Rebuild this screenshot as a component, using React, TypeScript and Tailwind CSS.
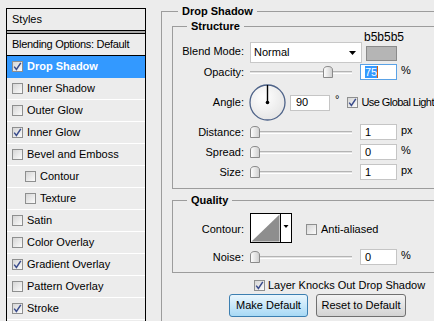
import React from "react";

function Check({ checked, className = "" }: { checked?: boolean; className?: string }) {
  return (
    <span
      className={
        "inline-flex w-[11px] h-[11px] border border-[#8e8f8f] bg-linear-to-br from-[#d6d6d6] to-[#fbfbfb] items-center justify-center shrink-0 " +
        className
      }
    >
      {checked && (
        <svg width="9" height="9" viewBox="0 0 9 9">
          <path d="M1.2 4.6 L3.4 7.4 L7.8 0.8" fill="none" stroke="#3a4c8c" strokeWidth="1.5" />
        </svg>
      )}
    </span>
  );
}

function Thumb() {
  return (
    <svg width="10" height="12" viewBox="0 0 10 12" className="shrink-0">
      <defs>
        <linearGradient id="tg" x1="0" y1="0" x2="1" y2="0">
          <stop offset="0" stopColor="#ffffff" />
          <stop offset="1" stopColor="#cfcfcf" />
        </linearGradient>
      </defs>
      <path d="M0.5 11.5 L0.5 4 Q0.5 0.5 5 0.5 Q9.5 0.5 9.5 4 L9.5 11.5 Z" fill="url(#tg)" stroke="#8a8a8a" />
    </svg>
  );
}

function Slider({ pos }: { pos: number }) {
  return (
    <div className="relative w-[102px] h-[16px] flex items-center">
      <div className="w-full h-[3px] border-t border-[#b4b4b4] bg-[#e2e2e2] border-b border-b-white" />
      <div className="absolute top-[2px]" style={{ left: pos }}>
        <Thumb />
      </div>
    </div>
  );
}

function Input({ value, focused }: { value: string; focused?: boolean }) {
  return (
    <div
      className={
        "w-[37px] h-[16px] bg-white border flex items-center pl-[4px] " +
        (focused ? "border-[#5aa2e6]" : "border-[#c5c5c5]")
      }
    >
      {focused ? (
        <>
          <span className="bg-[#3399ff] text-white leading-[12px]">{value}</span>
          <span className="w-[1px] h-[12px] bg-[#d0600f]" />
        </>
      ) : (
        <span className="leading-[12px]">{value}</span>
      )}
    </div>
  );
}

function SliderRow({ label, pos, value, unit, className = "" }: { label: string; pos: number; value: string; unit: string; className?: string }) {
  return (
    <div className={"flex items-center h-[16px] " + className}>
      <div className="w-[71px] text-right">{label}</div>
      <div className="ml-[6px]">
        <Slider pos={pos} />
      </div>
      <div className="ml-[8px]">
        <Input value={value} />
      </div>
      <div className="ml-[4px] -mt-[3px]">{unit}</div>
    </div>
  );
}

const rows: { label: string; checked?: boolean; selected?: boolean; indent?: boolean }[] = [
  { label: "Drop Shadow", checked: true, selected: true },
  { label: "Inner Shadow" },
  { label: "Outer Glow" },
  { label: "Inner Glow", checked: true },
  { label: "Bevel and Emboss" },
  { label: "Contour", indent: true },
  { label: "Texture", indent: true },
  { label: "Satin" },
  { label: "Color Overlay" },
  { label: "Gradient Overlay", checked: true },
  { label: "Pattern Overlay" },
  { label: "Stroke", checked: true },
  { label: "" },
];

export default function App() {
  return (
    <div className="w-[434px] h-[321px] overflow-hidden bg-[#ececec] flex items-start font-['Liberation_Sans',Arial,sans-serif] text-[11px] text-black leading-[13px]">
      {/* Left styles panel */}
      <div className="ml-[6px] mt-[8px] w-[140px] shrink-0 flex flex-col">
        <div className="h-[23px] shrink-0 border border-black flex items-center pl-[5px]">Styles</div>
        <div className="h-[2px] shrink-0 bg-[#a9a9a9] border-x border-black" />
        <div className="border border-black flex flex-col shrink-0">
          <div className="h-[22px] shrink-0 border-b border-black flex items-center pl-[5px] tracking-[-0.3px]">Blending Options: Default</div>
          {rows.map((r, i) => (
            <div
              key={i}
              className={
                "h-[22px] shrink-0 border-b flex items-center gap-[4px] " +
                (r.indent ? "pl-[18px] " : "pl-[5px] ") +
                (r.selected ? "bg-[#3399ff] border-[#3399ff] text-white font-bold" : "border-white")
              }
            >
              {r.label && <Check checked={r.checked} className={r.selected ? "from-[#b9d6f5] to-[#e9f2fc]" : ""} />}
              <span>{r.label}</span>
            </div>
          ))}
        </div>
      </div>

      {/* Right options */}
      <div className="ml-[15px] shrink-0 w-[300px]">
        <fieldset className="mt-[5px] w-[300px] h-[330px] border border-[#9c9c9c] pt-[2px]">
          <legend className="ml-[16px] px-[4px] font-bold">Drop Shadow</legend>

          <fieldset className="ml-[10px] w-[290px] border border-[#9c9c9c] pb-[8px]">
            <legend className="ml-[14px] px-[4px] font-bold">Structure</legend>

            {/* Blend mode */}
            <div className="flex items-center h-[21px] mt-[9px]">
              <div className="w-[71px] text-right -mt-[3px]">Blend Mode:</div>
              <div className="ml-[6px] w-[112px] h-[21px] bg-white border border-[#c8c8c8] flex items-center pl-[3px] pr-[5px] justify-between">
                <span>Normal</span>
                <svg width="7" height="4" viewBox="0 0 7 4">
                  <path d="M0 0 L7 0 L3.5 4 Z" fill="#000" />
                </svg>
              </div>
              <div className="ml-[4px] flex flex-col items-start -mt-[14px]">
                <span className="text-[12px] leading-[12px] -ml-[2px]">b5b5b5</span>
                <div className="mt-[3px] w-[31px] h-[15px] bg-[#b5b5b5] border border-[#8a8a8a]" />
              </div>
            </div>

            {/* Opacity */}
            <div className="flex items-center h-[16px] mt-[1px]">
              <div className="w-[71px] text-right">Opacity:</div>
              <div className="ml-[6px]">
                <Slider pos={73} />
              </div>
              <div className="ml-[8px]">
                <Input value="75" focused />
              </div>
              <div className="ml-[4px] -mt-[3px]">%</div>
            </div>

            {/* Angle */}
            <div className="flex items-center h-[37px] mt-[4px]">
              <div className="w-[71px] text-right">Angle:</div>
              <svg width="37" height="37" viewBox="0 0 37 37" className="ml-[5px] shrink-0">
                <defs>
                  <radialGradient id="dg" cx="0.4" cy="0.35" r="0.7">
                    <stop offset="0" stopColor="#ffffff" />
                    <stop offset="1" stopColor="#e4e4e4" />
                  </radialGradient>
                </defs>
                <circle cx="18.5" cy="18.5" r="17.5" fill="url(#dg)" stroke="#4d6288" strokeWidth="1.3" />
                <line x1="18.5" y1="1" x2="18.5" y2="18.5" stroke="#000" strokeWidth="1.4" />
                <circle cx="18.5" cy="18.5" r="1.8" fill="#000" />
              </svg>
              <div className="ml-[4px] w-[40px] h-[16px] bg-white border border-[#c5c5c5] flex items-center pl-[5px]">90</div>
              <div className="ml-[5px] -mt-[7px]">°</div>
              <Check checked className="ml-[8px] bg-linear-to-br from-[#c9c9c9] to-[#e6e6e6]" />
              <span className="ml-[3px] whitespace-nowrap tracking-[-0.55px]">Use Global Light</span>
            </div>

            <SliderRow label="Distance:" pos={0} value="1" unit="px" className="mt-[3px]" />
            <SliderRow label="Spread:" pos={0} value="0" unit="%" className="mt-[4px]" />
            <SliderRow label="Size:" pos={0} value="1" unit="px" className="mt-[4px]" />
          </fieldset>

          <fieldset className="ml-[10px] mt-[5px] w-[290px] border border-[#9c9c9c] pb-[7px]">
            <legend className="ml-[14px] px-[4px] font-bold">Quality</legend>

            <div className="flex items-center h-[30px] mt-[6px]">
              <div className="w-[71px] text-right mt-[2px]">Contour:</div>
              <svg width="42" height="30" viewBox="0 0 42 30" className="ml-[6px] shrink-0">
                <rect x="0.5" y="0.5" width="41" height="29" fill="#ffffff" stroke="#000" />
                <polygon points="1.5,28.5 29.5,1.5 29.5,28.5" fill="#8e8e8e" />
                <line x1="30.5" y1="1" x2="30.5" y2="29" stroke="#000" />
                <path d="M33.5 12 L38.5 12 L36 15 Z" fill="#000" />
              </svg>
              <Check className="ml-[14px] mt-[2px]" />
              <span className="ml-[4px] mt-[2px]">Anti-aliased</span>
            </div>

            <SliderRow label="Noise:" pos={0} value="0" unit="%" className="mt-[6px]" />
          </fieldset>

          <div className="flex items-center ml-[92px] mt-[6px] h-[12px]">
            <Check checked />
            <span className="ml-[3px] whitespace-nowrap">Layer Knocks Out Drop Shadow</span>
          </div>

          <div className="flex ml-[67px] mt-[3px] gap-[8px]">
            <button className="w-[79px] h-[23px] rounded-[3px] border border-[#3c7fb1] bg-linear-to-b from-[#eaf6fd] to-[#a7d9f5] text-[11px] text-black">
              Make Default
            </button>
            <button className="w-[90px] h-[23px] rounded-[3px] border border-[#707070] bg-linear-to-b from-[#f3f3f3] to-[#d3d3d3] text-[11px] text-black">
              Reset to Default
            </button>
          </div>
        </fieldset>
      </div>
    </div>
  );
}
